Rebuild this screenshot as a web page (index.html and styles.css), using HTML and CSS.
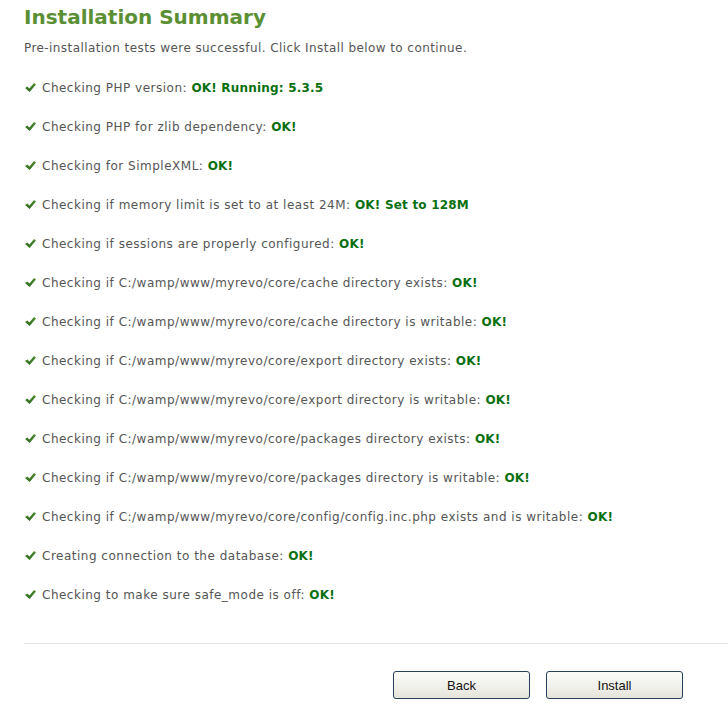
FILE: index.html
```html
<!DOCTYPE html>
<html lang="en">
<head>
  <meta charset="UTF-8">
  <title>Installation Summary</title>
  <link rel="stylesheet" href="styles.css">
</head>
<body>
  <div class="setup">
    <h2>Installation Summary</h2>
    <p class="intro">Pre-installation tests were successful. Click Install below to continue.</p>

    <ul class="checklist">
      <li><span class="tick"></span>Checking PHP version: <b>OK! Running: 5.3.5</b></li>
      <li><span class="tick"></span>Checking PHP for zlib dependency: <b>OK!</b></li>
      <li><span class="tick"></span>Checking for SimpleXML: <b>OK!</b></li>
      <li><span class="tick"></span>Checking if memory limit is set to at least 24M: <b>OK! Set to 128M</b></li>
      <li><span class="tick"></span>Checking if sessions are properly configured: <b>OK!</b></li>
      <li><span class="tick"></span>Checking if C:/wamp/www/myrevo/core/cache directory exists: <b>OK!</b></li>
      <li><span class="tick"></span>Checking if C:/wamp/www/myrevo/core/cache directory is writable: <b>OK!</b></li>
      <li><span class="tick"></span>Checking if C:/wamp/www/myrevo/core/export directory exists: <b>OK!</b></li>
      <li><span class="tick"></span>Checking if C:/wamp/www/myrevo/core/export directory is writable: <b>OK!</b></li>
      <li><span class="tick"></span>Checking if C:/wamp/www/myrevo/core/packages directory exists: <b>OK!</b></li>
      <li><span class="tick"></span>Checking if C:/wamp/www/myrevo/core/packages directory is writable: <b>OK!</b></li>
      <li><span class="tick"></span>Checking if C:/wamp/www/myrevo/core/config/config.inc.php exists and is writable: <b>OK!</b></li>
      <li><span class="tick"></span>Creating connection to the database: <b>OK!</b></li>
      <li><span class="tick"></span>Checking to make sure safe_mode is off: <b>OK!</b></li>
    </ul>

    <div class="buttons">
      <button type="button">Back</button>
      <button type="button">Install</button>
    </div>
  </div>
</body>
</html>
```

FILE: styles.css
```css
body {
  margin: 0;
  background: #fff;
  font-family: "DejaVu Sans", Verdana, sans-serif;
  font-size: 12px;
  color: #555;
  overflow: hidden;
}
.setup {
  padding-left: 24px;
}
h2 {
  margin: 0;
  padding-top: 4px;
  font-size: 20px;
  line-height: 26px;
  color: #5b8f34;
}
.intro {
  margin: 9px 0 0;
  line-height: 18px;
  letter-spacing: 0.42px;
}
.checklist {
  list-style: none;
  margin: 22px 0 0;
  padding: 0;
  letter-spacing: 0.5px;
}
.checklist li {
  height: 39px;
  line-height: 18px;
  display: flex;
  align-items: flex-start;
  white-space: pre;
}
.checklist b {
  color: #0a7010;
  letter-spacing: 0.2px;
}
/* green check mark */
.tick {
  width: 11px;
  height: 9px;
  margin: 4px 6px 0 1px;
  flex: none;
  background: linear-gradient(#4f8f30, #2f6a20);
  clip-path: polygon(0 55%, 22% 38%, 40% 62%, 82% 0, 100% 18%, 42% 100%);
}
.buttons {
  border-top: 1px solid #e2e2e2;
  margin-top: 18px;
  padding: 27px 45px 0 0;
  display: flex;
  justify-content: flex-end;
  gap: 16px;
}
.buttons button {
  width: 137px;
  height: 28px;
  font-family: "Liberation Sans", Arial, sans-serif;
  font-size: 13px;
  color: #111;
  background: linear-gradient(#fbfbf8, #f0f0ea 60%, #e4e4da);
  border: 1px solid #25415e;
  border-radius: 3px;
}
```
